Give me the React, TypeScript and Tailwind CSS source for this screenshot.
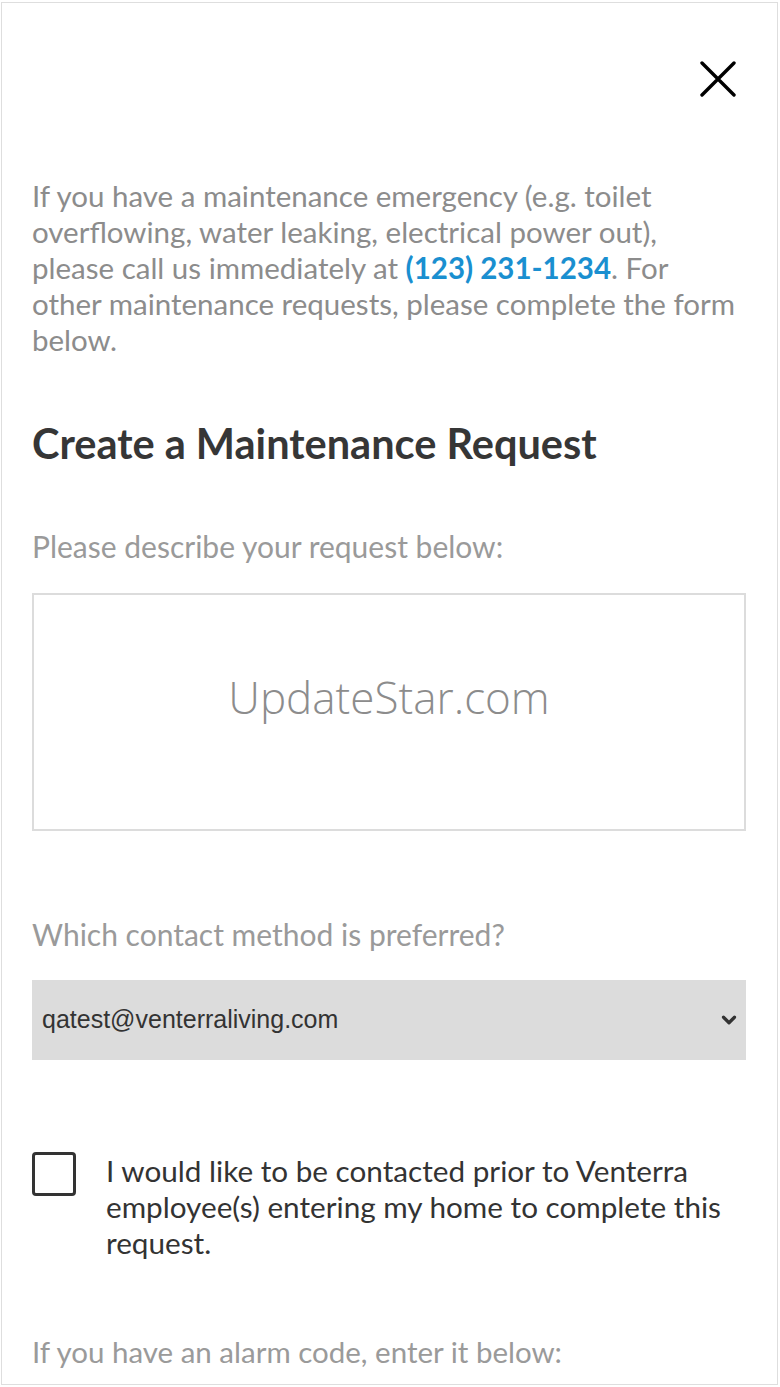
import { ChevronDown } from "lucide-react";

export default function App() {
  return (
    <div className="min-h-screen bg-white pt-[2px] pl-[1px] pr-[2px] pb-[1px] font-['Lato',sans-serif]">
      <div className="h-[1383px] overflow-hidden border border-[#dedede] bg-white">
        {/* Close button */}
        <div className="flex justify-end pr-[41px] pt-[58px]">
          <button className="h-[36px] w-[36px] text-black" aria-label="Close">
            <svg viewBox="0 0 36 36" className="h-[36px] w-[36px]">
              <path d="M2 2 L34 34 M34 2 L2 34" stroke="currentColor" strokeWidth="3.4" strokeLinecap="round" />
            </svg>
          </button>
        </div>

        <div className="pl-[30px] pr-[31px]">
          <p className="mt-[81px] mr-[-6px] whitespace-nowrap text-[29.5px] leading-[36px] text-[#8c8c8c]">
            If you have a maintenance emergency (e.g. toilet
            <br />
            overflowing, water leaking, electrical power out),
            <br />
            please call us immediately at <span className="font-bold text-[#1a8fd0]">(123) 231-1234</span>. For
            <br />
            other maintenance requests, please complete the form
            <br />
            below.
          </p>

          <h1 className="mt-[60px] text-[41.5px] font-bold leading-[50px] text-[#363636]">
            Create a Maintenance Request
          </h1>

          <label className="mt-[60px] block text-[30px] leading-[36px] text-[#9a9a9a]">
            Please describe your request below:
          </label>

          <div className="mt-[29px] flex h-[238px] items-center justify-center border-2 border-[#dcdcdc] pb-[30px]">
            <span className="font-['Open_Sans',sans-serif] text-[44px] font-light text-[#8c8c8c]">
              UpdateStar.com
            </span>
          </div>

          <label className="mt-[85px] block text-[30px] leading-[36px] text-[#9a9a9a]">
            Which contact method is preferred?
          </label>

          <div className="mt-[28px] flex h-[80px] items-center justify-between bg-[#dcdcdc] pl-[10px] pr-[6px]">
            <span className="font-['Liberation_Sans',sans-serif] text-[25px] text-[#333333]">
              qatest@venterraliving.com
            </span>
            <ChevronDown className="h-[22px] w-[22px] text-[#333333]" strokeWidth={3.5} />
          </div>

          <div className="mt-[92px] flex items-start gap-[30px]">
            <div className="h-[44px] w-[44px] shrink-0 rounded-[4px] border-[3px] border-[#333333]" />
            <p className="mt-[1px] text-[29.7px] leading-[36px] text-[#333333]">
              I would like to be contacted prior to Venterra employee(s) entering my home to complete this request.
            </p>
          </div>

          <label className="mt-[73px] block text-[29.5px] leading-[36px] text-[#9a9a9a]">
            If you have an alarm code, enter it below:
          </label>
        </div>
      </div>
    </div>
  );
}
